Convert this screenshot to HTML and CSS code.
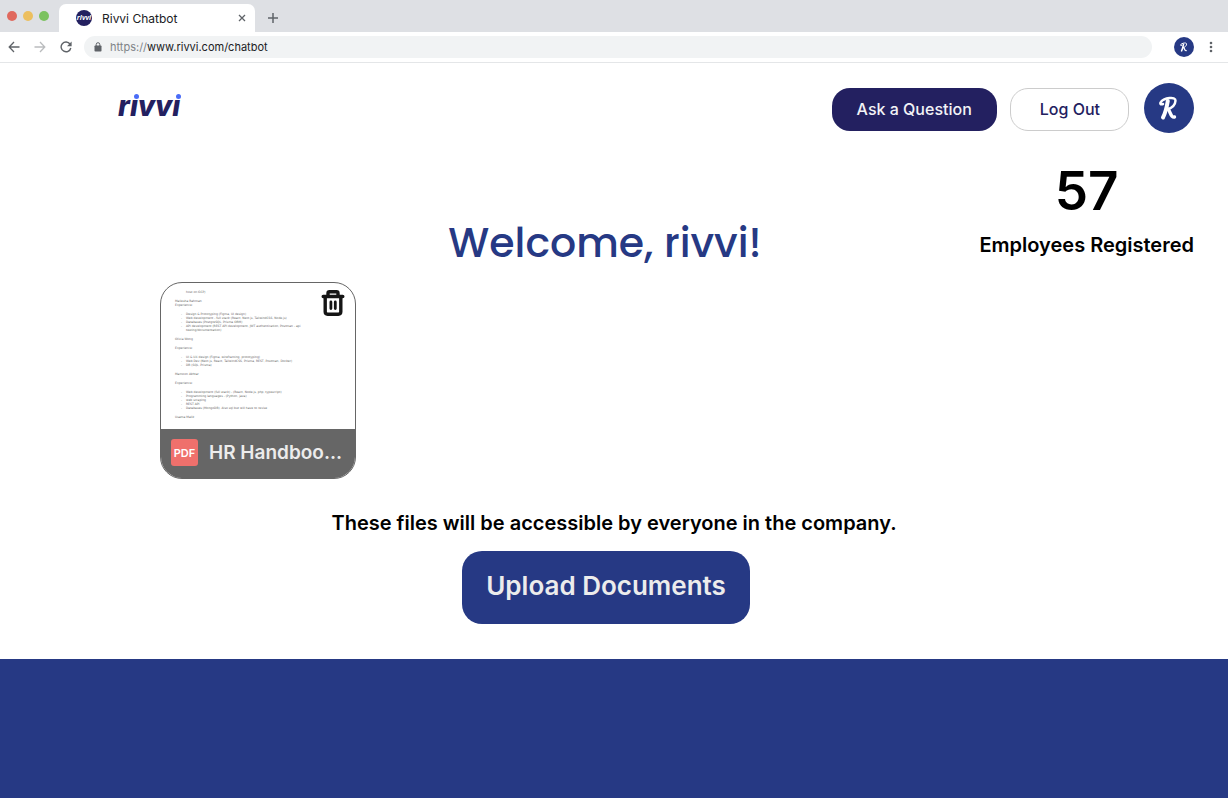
FILE: index.html
```html
<!DOCTYPE html>
<html lang="en">
<head>
<meta charset="utf-8">
<title>Rivvi Chatbot</title>
<link rel="stylesheet" href="styles.css">
</head>
<body>
<div class="browser">
  <div class="tabstrip">
    <div class="lights"><span class="light red"></span><span class="light amber"></span><span class="light green"></span></div>
    <div class="tab">
      <span class="favicon">rivvi</span>
      <span class="tab-title">Rivvi Chatbot</span>
      <button class="icon-btn" aria-label="Close tab"><svg width="8" height="8" viewBox="0 0 8 8"><path d="M1 1l6 6M7 1L1 7" stroke="#5f6368" stroke-width="1.300"/></svg></button>
    </div>
    <button class="icon-btn new-tab" aria-label="New tab"><svg width="12" height="12" viewBox="0 0 12 12"><path d="M6 1v10M1 6h10" stroke="#5f6368" stroke-width="1.500"/></svg></button>
  </div>
  <div class="toolbar">
    <button class="icon-btn" aria-label="Back"><svg width="12" height="12" viewBox="0 0 12 12" fill="none"><path d="M11.500 6H1.500M6 1L1.200 6L6 11" stroke="#5f6368" stroke-width="1.300"/></svg></button>
    <button class="icon-btn" aria-label="Forward"><svg width="12" height="12" viewBox="0 0 12 12" fill="none"><path d="M.5 6h10M6 1l4.800 5L6 11" stroke="#babcbe" stroke-width="1.300"/></svg></button>
    <button class="icon-btn" aria-label="Reload"><svg width="12" height="12" viewBox="0 0 12 12"><path d="M10 3A4.900 4.900 0 1 0 10.800 7" fill="none" stroke="#5f6368" stroke-width="1.400"/><path d="M11.600.6v4.600H7z" fill="#5f6368"/></svg></button>
    <label class="address">
      <svg width="8" height="10" viewBox="0 0 8 10"><rect x=".5" y="3.500" width="7" height="6" rx=".8" fill="#5f6368"/><path d="M2.200 4V2.500a1.800 1.800 0 0 1 3.600 0V4" fill="none" stroke="#5f6368"/></svg>
      <span class="url"><span class="scheme">https://</span>www.rivvi.com/chatbot</span>
    </label>
    <svg class="profile" viewBox="0 0 50 50" role="img" aria-label="Profile"><use href="#r-badge"/></svg>
    <button class="icon-btn" aria-label="Menu"><svg width="4" height="12" viewBox="0 0 4 12" fill="#5f6368"><circle cx="2" cy="2" r="1.300"/><circle cx="2" cy="6" r="1.300"/><circle cx="2" cy="10" r="1.300"/></svg></button>
  </div>
</div>

<svg class="defs" aria-hidden="true"><defs><g id="r-badge"><circle cx="25" cy="25" r="25" fill="#263984"/><g fill="none" stroke="#fff" stroke-linecap="round" stroke-linejoin="round"><path d="M23.800 18C22.800 24 21.300 30 19 34.500" stroke-width="4"/><path d="M19 21C16.500 22 15.500 20.500 17 18.800C20 15.200 31.800 12.800 31.500 17.800C31.200 22.300 27.500 25 24 26.200" stroke-width="2.500"/><path d="M24 26C26.500 28 26.500 35.200 30.500 34" stroke-width="3.400"/></g></g></defs></svg>

<header class="header">
  <a class="logo" href="#" aria-label="rivvi">r<span class="dotted">ı</span>vv<span class="dotted">ı</span></a>
  <nav class="actions">
    <button class="btn primary">Ask a Question</button>
    <button class="btn outline">Log Out</button>
    <svg class="avatar" viewBox="0 0 50 50" role="img" aria-label="Account"><use href="#r-badge"/></svg>
  </nav>
</header>

<main class="main">
  <section class="stats">
    <strong class="count">57</strong>
    <span class="count-label">Employees Registered</span>
  </section>
  <h1 class="welcome">Welcome, rivvi!</h1>
  <section class="files">
    <article class="file">
      <div class="preview">
        <p class="deep">host on GCP)</p>
        <p class="gap">Maliesha Rahman<br>Experience:</p>
        <ul class="gap"><li>Design &amp; Prototyping (Figma, UI design)</li><li>Web development - full stack (React, Next.js, TailwindCSS, Node.js)</li><li>Databases (PostgreSQL, Prisma ORM)</li><li>API development (REST API development, JWT authentication, Postman - api<br>testing/documentation)</li></ul>
        <p class="gap">Olivia Wong</p>
        <p class="gap">Experience:</p>
        <ul class="gap"><li>UI &amp; UX design (Figma, wireframing, prototyping)</li><li>Web Dev (Next.js, React, TailwindCSS, Prisma, REST, Postman, Docker)</li><li>DB (SQL, Prisma)</li></ul>
        <p class="gap">Mamoon Akhtar</p>
        <p class="gap">Experience:</p>
        <ul class="gap"><li>Web development (full stack) - (React, Node.js, php, typescript)</li><li>Programming languages - (Python, java)</li><li>web scraping</li><li>REST API</li><li>Databases (MongoDB). Also sql but will have to revise</li></ul>
        <p class="gap">Usama Malik</p>
      </div>
      <button class="icon-btn trash" aria-label="Delete file"><svg width="24" height="26" viewBox="0 0 24 26" fill="none" stroke="#151515" stroke-linejoin="round" stroke-linecap="round"><path d="M2.200 6.500h19.600M7 6V3.300q0-1.500 1.500-1.500h7q1.500 0 1.500 1.500V6M4.200 7v14.800q0 2.400 2.400 2.400h10.800q2.400 0 2.400-2.400V7" stroke-width="3.400"/><path d="M9.900 12v6.500M14.300 12v6.500" stroke-width="2.800"/></svg></button>
      <div class="caption"><span class="pdf">PDF</span><span class="name">HR Handboo...</span></div>
    </article>
  </section>
  <p class="note">These files will be accessible by everyone in the company.</p>
  <button class="upload">Upload Documents</button>
</main>
<footer class="footer"></footer>
</body>
</html>
```
FILE: styles.css
```css
* { box-sizing: border-box; }
body {
  margin: 0;
  min-height: 100vh;
  display: flex;
  flex-direction: column;
  background: #fff;
  color: #000;
  font-family: Inter, "Liberation Sans", sans-serif;
}
button { font: inherit; border: 0; padding: 0; cursor: pointer; }
svg { display: block; }
p, ul, h1 { margin: 0; padding: 0; }
.icon-btn { display: flex; background: none; }
.defs { position: absolute; width: 0; height: 0; }

.tabstrip { display: flex; height: 32px; background: #dee0e4; }
.lights { display: flex; gap: 6px; padding: 11px 10px 0 7px; }
.light { width: 10px; height: 10px; border-radius: 50%; }
.red { background: #e0695e; }
.amber { background: #ecbf5f; }
.green { background: #7bc25f; }
.tab {
  display: flex;
  align-items: center;
  width: 196px;
  height: 28px;
  margin-top: 4px;
  padding: 0 9px 0 17px;
  border-radius: 7px 7px 0 0;
  background: #fff;
}
.favicon {
  display: flex;
  justify-content: center;
  width: 16px;
  height: 16px;
  border-radius: 50%;
  background: #232060;
  color: #fff;
  font: italic 700 7px/16px "Open Sans", sans-serif;
}
.tab-title { flex: 1; margin-left: 10px; font-size: 12px; color: #202124; }
.new-tab { align-items: center; height: 36px; margin-left: 12px; }
.toolbar {
  display: flex;
  align-items: center;
  gap: 14px;
  height: 31px;
  padding: 0 15px 1px 8px;
  border-bottom: 1px solid #e4e6e8;
}
.address {
  flex: 1;
  display: flex;
  align-items: center;
  gap: 8px;
  height: 22px;
  margin-left: -2px;
  padding-left: 10px;
  border-radius: 11px;
  background: #f1f3f4;
}
.url { font-size: 11px; color: #202124; }
.scheme { color: #808488; }
.profile { width: 20px; height: 20px; margin: 0 1px 0 8px; }

.header {
  display: flex;
  justify-content: space-between;
  align-items: flex-start;
  padding: 20px 34px 0 118px;
}
.logo {
  padding-top: 6px;
  color: #232060;
  font: italic 800 28px/34px Inter, sans-serif;
  text-decoration: none;
}
.dotted { position: relative; }
.dotted::after {
  content: "";
  position: absolute;
  top: 5px;
  right: -1px;
  width: 5px;
  height: 5px;
  border-radius: 50%;
  background: #4a6cf7;
}
.actions { display: flex; align-items: center; }
.btn { height: 43px; margin-top: 2px; border-radius: 18px; font-size: 16px; font-weight: 500; }
.primary { padding: 0 25px; background: #232060; color: #f2f2f6; }
.outline {
  margin-left: 13px;
  margin-right: 15px;
  padding: 0 28px 0 29px;
  border: 1px solid #ccc;
  background: #fff;
  color: #232060;
}
.avatar { width: 50px; height: 50px; }

.main { display: flex; flex-direction: column; align-items: center; }
.stats {
  display: flex;
  flex-direction: column;
  align-items: center;
  align-self: flex-end;
  margin: 24px 34px 0 0;
}
.count { font-size: 53px; line-height: 68px; font-weight: 600; }
.count-label { margin-top: 7px; font-size: 20px; line-height: 26px; font-weight: 600; }
.welcome {
  margin: -47px 18px 0 0;
  color: #263984;
  font-family: Poppins, Inter, sans-serif;
  font-size: 41px;
  line-height: 64px;
  font-weight: 500;
}
.files { align-self: stretch; padding: 7px 160px 0; }
.file {
  position: relative;
  display: flex;
  flex-direction: column;
  width: 196px;
  height: 197px;
  overflow: hidden;
  border: 1px solid #666;
  border-radius: 22px;
}
.preview {
  flex: 1;
  padding: 7px 14px 0;
  color: #666;
  font: 3px/4px "DejaVu Sans", sans-serif;
  white-space: nowrap;
}
.preview .deep { padding-left: 11px; }
.preview .gap { margin-top: 5px; }
.preview ul { padding-left: 11px; list-style: none; }
.preview li { position: relative; }
.preview li::before { content: "-"; position: absolute; left: -5px; }
.trash { position: absolute; top: 7px; right: 10px; }
.caption {
  display: flex;
  flex-shrink: 0;
  align-items: center;
  gap: 11px;
  height: 49px;
  padding: 0 10px 3px;
  background: #666;
}
.pdf {
  flex: none;
  width: 27px;
  height: 27px;
  border-radius: 3px;
  background: #ef706c;
  color: #fff;
  font-size: 11px;
  line-height: 28px;
  font-weight: 600;
  text-align: center;
}
.name { color: #ececec; font-size: 19px; font-weight: 600; white-space: nowrap; }
.note { margin-top: 31px; font-size: 20px; line-height: 26px; font-weight: 600; }
.upload {
  height: 73px;
  margin: 15px 16px 0 0;
  padding: 0 24px 4px;
  border-radius: 20px;
  background: #263984;
  color: #ececec;
  font-size: 26px;
  font-weight: 600;
}
.footer { flex: 1; min-height: 139px; margin-top: 35px; background: #263984; }
```
